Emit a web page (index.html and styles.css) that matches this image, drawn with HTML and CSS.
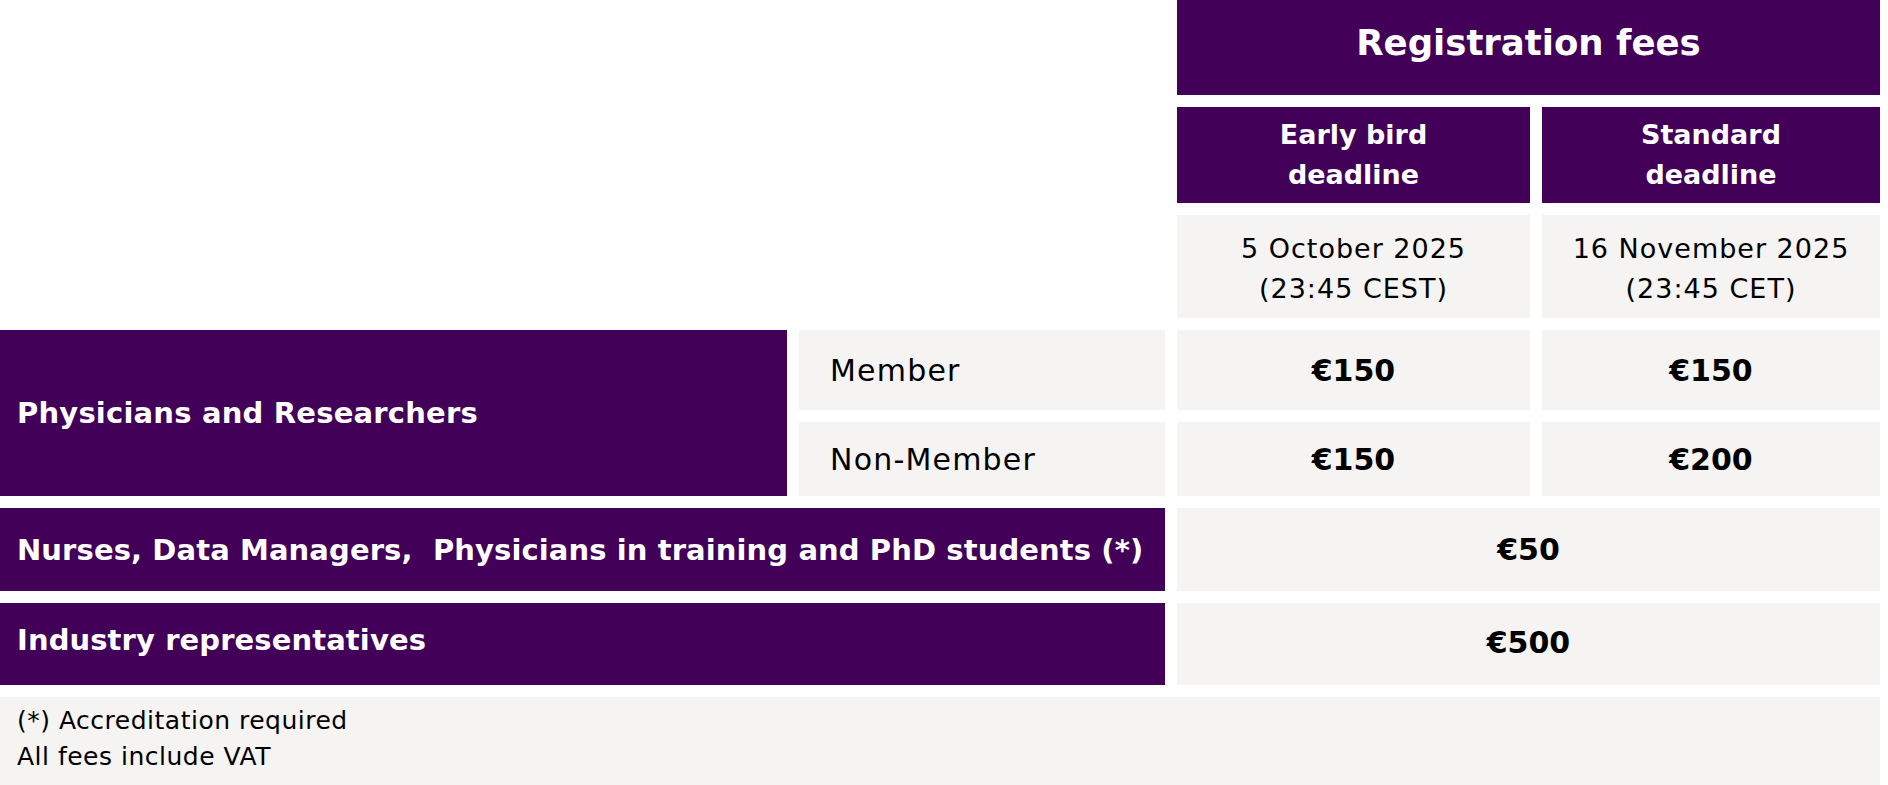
FILE: index.html
```html
<!DOCTYPE html>
<html lang="en">
<head>
<meta charset="utf-8">
<title>Registration fees</title>
<link rel="stylesheet" href="styles.css">
</head>
<body>
<div class="fees">
  <div class="blank"></div>
  <div class="head head-title">Registration fees</div>
  <div class="head head-sub">Early bird<br>deadline</div>
  <div class="head head-sub">Standard<br>deadline</div>
  <div class="cell date">5 October 2025<br>(23:45 CEST)</div>
  <div class="cell date">16 November 2025<br>(23:45 CET)</div>

  <div class="cat cat-phys">Physicians and Researchers</div>
  <div class="cell label">Member</div>
  <div class="cell price">€150</div>
  <div class="cell price">€150</div>
  <div class="cell label">Non-Member</div>
  <div class="cell price">€150</div>
  <div class="cell price">€200</div>

  <div class="cat cat-wide">Nurses, Data Managers,&nbsp; Physicians in training and PhD students (*)</div>
  <div class="cell price price-wide">€50</div>

  <div class="cat cat-wide cat-ind">Industry representatives</div>
  <div class="cell price price-wide price-ind">€500</div>

  <div class="note">
    <p>(*) Accreditation required</p>
    <p>All fees include VAT</p>
  </div>
</div>
</body>
</html>
```

FILE: styles.css
```css
* { box-sizing: border-box; }

html, body {
  margin: 0;
  padding: 0;
  background: #ffffff;
}

body {
  font-family: "DejaVu Sans", "Open Sans", sans-serif;
  color: #000000;
}

.fees {
  width: 1880px;
  display: grid;
  grid-template-columns: 787px 366px 353px 338px;
  grid-template-rows: 95px 96px 103px 80px 74px 83px 82px 88px;
  column-gap: 12px;
  row-gap: 12px;
}

.blank {
  grid-column: 1 / 3;
  grid-row: 1 / 4;
}

.head {
  background: #420058;
  color: #ffffff;
  font-weight: 700;
  display: flex;
  align-items: center;
  justify-content: center;
  text-align: center;
}

.head-title {
  grid-column: 3 / 5;
  font-size: 35.5px;
  padding-bottom: 10px;
}

.head-sub {
  font-size: 27px;
  line-height: 40px;
}

.cell {
  background: #f5f4f2;
  display: flex;
  align-items: center;
}

.date {
  justify-content: center;
  text-align: center;
  font-size: 27px;
  line-height: 40px;
  letter-spacing: 1px;
  padding-top: 4px;
}

.cat {
  background: #420058;
  color: #ffffff;
  font-weight: 700;
  font-size: 29px;
  letter-spacing: 0.2px;
  display: flex;
  align-items: center;
  padding-left: 17px;
}

.cat-phys {
  grid-column: 1;
  grid-row: 4 / 6;
}

.cat-wide {
  grid-column: 1 / 3;
  letter-spacing: 0.1px;
}

.cat-ind {
  padding-bottom: 8px;
}

.label {
  padding-left: 31px;
  font-size: 30px;
  letter-spacing: 1.2px;
}

.price {
  justify-content: center;
  font-size: 30px;
  font-weight: 700;
}

.price-wide {
  grid-column: 3 / 5;
}

.price-ind {
  padding-bottom: 4px;
}

.note {
  grid-column: 1 / 5;
  background: #f5f4f2;
  padding: 6px 17px 0;
  font-size: 25px;
  line-height: 36px;
  letter-spacing: 0.5px;
}

.note p {
  margin: 0;
}
```
